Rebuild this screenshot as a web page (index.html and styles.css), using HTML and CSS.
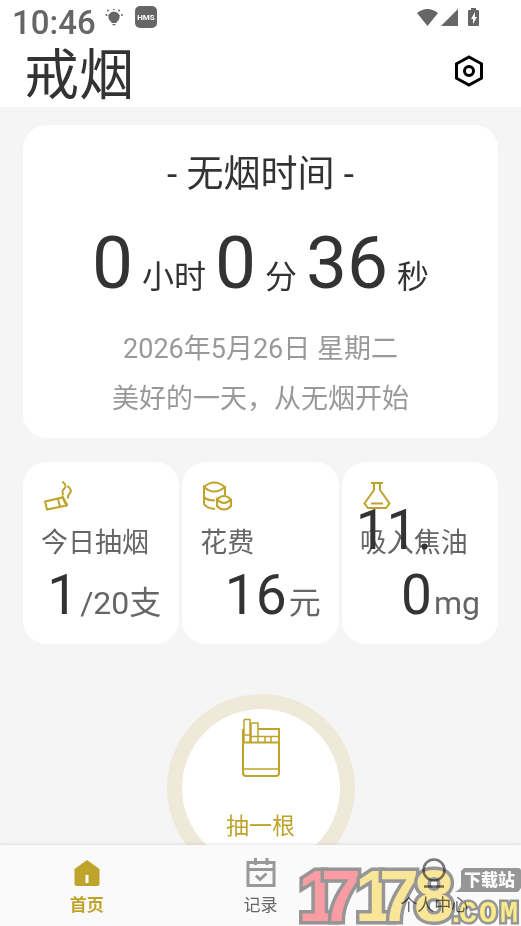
FILE: index.html
```html
<!DOCTYPE html>
<html lang="zh-CN">
<head>
<meta charset="utf-8">
<meta name="viewport" content="width=device-width, initial-scale=1">
<title>戒烟</title>
<link rel="stylesheet" href="styles.css">
</head>
<body>
<header class="top">
  <div class="status">
    <span class="clock">10:46</span>
    <svg class="status-bulb" width="20" height="20" viewBox="0 0 20 20" fill="#666"><circle cx="10" cy="11" r="5.600"/><path d="M4 9h12l-3 5H7zM7.500 15h5v2h-5zM8.500 18h3v1.200h-3z"/><circle cx="2.500" cy="9" r="1"/><circle cx="4" cy="4.500" r="1"/><circle cx="10" cy="3.500" r=".8"/><circle cx="15" cy="4.500" r="1"/><circle cx="18" cy="9" r="1"/></svg>
    <svg class="status-hms" width="22" height="22" viewBox="0 0 22 22"><rect width="22" height="22" rx="5" fill="#666"/><text x="11" y="14" text-anchor="middle" font-size="8">HMS</text></svg>
    <svg class="status-signal" width="64" height="20" viewBox="0 0 64 20" fill="#666"><path d="M0 5Q10.500-3 21 5L10.500 18zM24 18 41 1v17zM54 2V0h5v2h2q1 0 1 1v14q0 1-1 1h-9q-1 0-1-1V3q0-1 1-1z"/><path fill="#fff" d="M58 4l-4 7h2v5l4-7h-2z"/></svg>
  </div>
  <div class="title-row">
    <h1>戒烟</h1>
    <button class="settings" aria-label="设置"><svg width="30" height="34" viewBox="0 0 30 34" fill="none" stroke="#000" stroke-width="3"><path d="M15 3 27.500 9.800V24.200L15 31 2.500 24.200V9.800z"/><circle cx="15" cy="17" r="4.500"/></svg></button>
  </div>
</header>
<main>
  <section class="card timer">
    <h2>- 无烟时间 -</h2>
    <p class="elapsed"><b>0</b><span>小时</span><b>0</b><span>分</span><b>36</b><span>秒</span></p>
    <p class="note">2026年5月26日 星期二</p>
    <p class="note">美好的一天，从无烟开始</p>
  </section>
  <section class="stats">
    <article class="card stat">
      <svg width="30" height="30" viewBox="0 0 30 30" fill="none" stroke="#bfa42c" stroke-width="2"><path d="M2 20.500 19.500 16.500 23.500 24.500 4 28.500zM15 17.500l2 8.500M19 14.500l5.500 10"/><path d="M19.500 0.500c5 5 3 6 1 8q-2 2 0 5.500M24.500 5q5 4 2.500 7-3 3-1.500 5.500"/></svg>
      <h3>今日抽烟</h3>
      <p class="value"><b>1</b><span>/20支</span></p>
    </article>
    <article class="card stat">
      <svg width="30" height="30" viewBox="0 0 30 30" fill="none" stroke="#bfa42c" stroke-width="2"><path d="M2 6Q12-3 23 6 12 15 2 6V23q3 4.500 11 5M2 16q3 3.500 11 3.500M23 6V14"/><path d="M15 18.500q7-7 14 0-7 7-14 0V25q3 3.500 7 3.500t7-3.500V18.500"/></svg>
      <h3>花费</h3>
      <p class="value"><b>16</b><span>元</span></p>
    </article>
    <article class="card stat">
      <svg width="30" height="30" viewBox="0 0 30 30" fill="none" stroke="#bfa42c" stroke-width="2"><path d="M9 2h12M12 2V9L2.500 22.500 6 27H24l3.500-4.500L18 9V2M9 22.500H21"/></svg>
      <h3>吸入焦油</h3>
      <p class="value"><b>11.<wbr>0</b><span>mg</span></p>
    </article>
  </section>
  <button class="smoke">
    <svg width="40" height="60" viewBox="0 0 40 60" fill="none" stroke="#bfa42c" stroke-width="1.500"><path stroke-width="2" d="M2 11V55q0 3 3 3H35q3 0 3-3V11H17M2 24.500H38"/><path d="M2 51H38M3 1.500H9V24M3 1.500V24M3 17H9M10 5H17V24M10 5V24M10 18.500H38M24 18.500v6M30 18.500v6"/></svg>
    <span>抽一根</span>
  </button>
</main>
<nav>
  <a class="active" href="#home"><svg width="30" height="30" viewBox="0 0 30 30" fill="#bfa42c"><path d="M15 2 27.500 11V26q0 2-2 2H4.500q-2 0-2-2V11z"/><path fill="#fff" d="M13.500 17h3v8h-3z"/></svg><span>首页</span></a>
  <a href="#records"><svg width="30" height="30" viewBox="0 0 30 30" fill="none" stroke="#999" stroke-width="3"><path d="M2 4.500H28V27.500H2zM2 11.500H28M9.500 0V7M21 0V7M10 17.500l4 4 6.500-6"/></svg><span>记录</span></a>
  <a href="#me"><svg width="30" height="30" viewBox="0 0 30 30" fill="none" stroke="#777" stroke-width="2.500"><circle cx="15" cy="12" r="10.500"/><path d="M5 28.500H25"/></svg><span>个人中心</span></a>
  <svg class="site-mark" width="224" height="64" viewBox="0 0 224 64" role="img" aria-label="17178.COM 下载站">
    <g class="mark-number" font-size="72"><text class="pink" x="1 24" y="59">17</text><text class="yellow" x="58 82 117" y="59">178</text></g>
    <text class="mark-domain" x="150 162 182 203" y="60" font-size="30">.COM</text>
    <path fill="#999" d="M167 6H221q3 0 3 3V26l-3 4H158q6-3 6-6V9z"/>
    <text class="mark-label" x="167" y="24" font-size="17">下载站</text>
  </svg>
</nav>
</body>
</html>
```
FILE: styles.css
```css
* { box-sizing: border-box; }
body {
  margin: 0;
  height: 100vh;
  display: flex;
  flex-direction: column;
  background: #f5f5f5;
  color: #333;
  font-family: Roboto, "Noto Sans CJK SC", sans-serif;
}
h1, h2, h3, p { margin: 0; font-weight: 400; }
b { font-weight: 400; }
svg { display: block; flex: none; }
button { border: 0; padding: 0; font: inherit; }

.top { background: #fff; }
.status { display: flex; align-items: flex-start; height: 40px; padding: 6px 40px 0 12px; }
.clock { color: #666; font-size: 33px; line-height: 34px; font-weight: 500; }
.status-bulb { margin-left: 8px; }
.status-hms { margin-left: 11px; }
.status-hms text { fill: #fff; font-weight: 700; }
.status-signal { margin: 2px 0 0 auto; }
.title-row { display: flex; justify-content: space-between; align-items: flex-start; height: 67px; padding: 0 37px 0 24px; }
h1 { font-size: 55px; line-height: 71px; }
.settings { margin-top: 14px; background: none; }

main { flex: 1; min-height: 0; overflow-y: auto; scrollbar-width: none; padding: 18px 23px 0; }
.card { background: #fff; border-radius: 24px; }
.timer { padding: 25px 0 14px; text-align: center; }
h2 { font-size: 37px; line-height: 50px; }
.elapsed { display: flex; justify-content: center; align-items: baseline; gap: 9px; margin: 21px 0 4px; line-height: 85px; }
.elapsed b { font-size: 73px; }
.elapsed span { font-size: 32px; }
.note { color: #999; font-size: 27px; line-height: 50px; }

.stats { display: grid; grid-template-columns: repeat(3, minmax(0, 1fr)); gap: 3px; margin-top: 24px; }
.stat { padding: 19px 18px 16px; }
.stat svg { margin-left: 2px; }
h3 { color: #666; font-size: 27px; line-height: 40px; margin: 12px 0 0; white-space: nowrap; }
.value { display: flex; justify-content: flex-end; align-items: flex-end; gap: 2px; height: 65px; text-align: right; }
.value b { font-size: 55px; line-height: 65px; }
.value span { color: #666; font-size: 32px; line-height: 49px; white-space: nowrap; }

.smoke {
  display: flex;
  flex-direction: column;
  align-items: center;
  gap: 34px;
  width: 188px;
  height: 188px;
  margin: 50px auto 0;
  padding-top: 9px;
  border: 15px solid #eee9d8;
  border-radius: 50%;
  background: #fff;
  color: #bfa42c;
  font-size: 23px;
  line-height: 30px;
}

nav { position: relative; display: flex; height: 81px; background: #fafafa; box-shadow: 0 0 4px rgba(0, 0, 0, .15); }
nav a { flex: 1; display: flex; flex-direction: column; align-items: center; gap: 4px; padding-top: 13px; color: #666; font-size: 17px; line-height: 26px; text-decoration: none; }
nav .active { color: #bfa42c; font-weight: 700; }

.site-mark { position: absolute; right: 0; bottom: 0; mix-blend-mode: multiply; pointer-events: none; }
.site-mark text { font-weight: 700; paint-order: stroke; stroke: #999; stroke-linejoin: miter; }
.site-mark .mark-number text { font-family: "Liberation Sans Narrow", "Liberation Sans", sans-serif; stroke-width: 7px; }
.pink { fill: #ff9fa6; }
.yellow { fill: #ffeb9c; }
.site-mark .mark-domain { fill: #fff08c; font-family: "Liberation Mono", monospace; stroke-width: 5px; }
.site-mark .mark-label { fill: #fff; font-family: "Noto Sans CJK SC", sans-serif; font-weight: 900; stroke: none; }
```
